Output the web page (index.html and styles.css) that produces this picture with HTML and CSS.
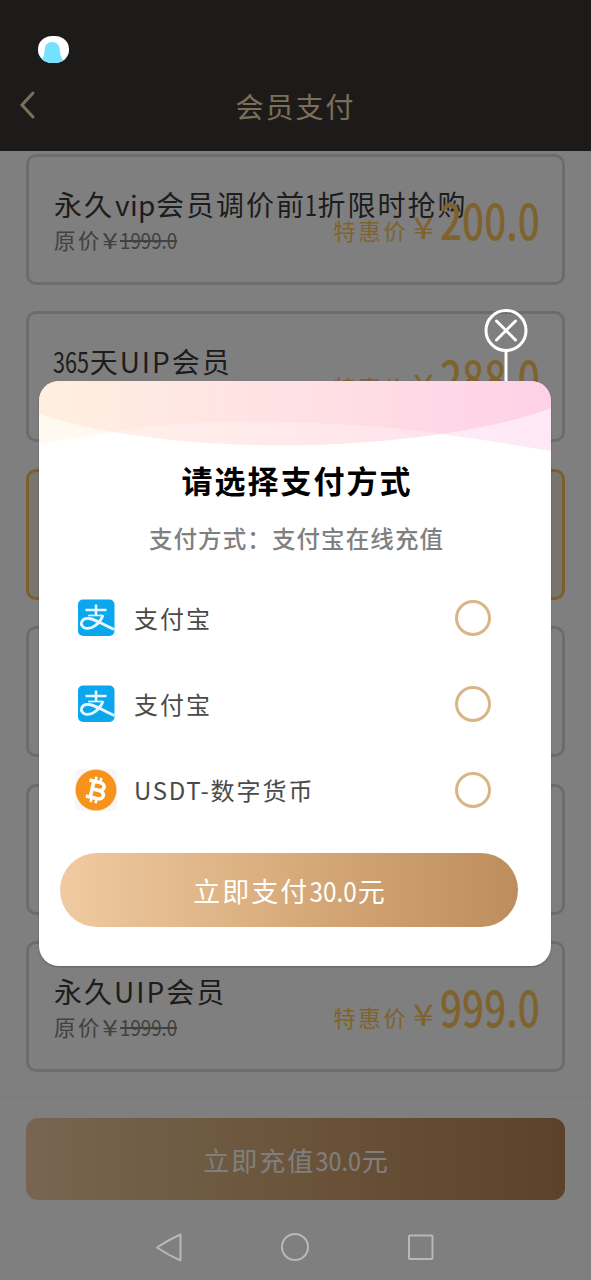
FILE: index.html
```html
<!DOCTYPE html>
<html lang="zh-CN">
<head>
<meta charset="utf-8">
<title>会员支付</title>
<link rel="stylesheet" href="styles.css">
</head>
<body>
<div class="screen">
  <header class="header">
    <svg class="back" viewBox="0 0 18 28"><path d="M14 2 3 14 14 26"/></svg>
    <h1 class="header-title">会员支付</h1>
  </header>
  <main class="plans">
    <section class="plan">
      <div class="info"><div class="name">永久<span class="vip">vip</span>会员调价前<span class="one">1</span>折限时抢购</div><div class="old">原价<span class="old-yen">¥</span><s>1999.0</s></div></div>
      <div class="deal">特惠价<span class="yen">¥</span><span class="amount">200.0</span></div>
    </section>
    <section class="plan">
      <div class="info"><div class="name"><span class="days">365</span>天<span class="upper">UIP</span>会员</div></div>
      <div class="deal">特惠价<span class="yen">¥</span><span class="amount">288.0</span></div>
    </section>
    <section class="plan selected"></section>
    <section class="plan"></section>
    <section class="plan"></section>
    <section class="plan">
      <div class="info"><div class="name">永久<span class="upper">UIP</span>会员</div><div class="old">原价<span class="old-yen">¥</span><s>1999.0</s></div></div>
      <div class="deal">特惠价<span class="yen">¥</span><span class="amount">999.0</span></div>
    </section>
  </main>
  <footer class="footer">
    <div class="recharge">立即充值<span class="sum">30.0</span>元</div>
  </footer>
</div>

<div class="scrim">
  <svg class="status-dot" viewBox="0 0 31 27"><defs><clipPath id="dot"><rect width="31" height="27" rx="14" ry="13"/></clipPath></defs><g clip-path="url(#dot)"><rect width="31" height="27" fill="#fff"/><path d="M4 23C7 20 6 16 7 12C8 4 20 4 21.500 12C22.500 18 22 20 25 24L22 27H7Z" fill="#74e2fc"/></g></svg>
  <div class="close">
    <svg viewBox="0 0 44 72"><circle cx="22" cy="21.500" r="20"/><path d="M12.500 12 31.500 31M31.500 12 12.500 31M22 42V72"/></svg>
  </div>
  <div class="dialog">
    <svg class="wave" viewBox="0 0 512 71">
      <defs>
        <linearGradient id="w1"><stop offset="0" stop-color="#ffe2cc"/><stop offset=".5" stop-color="#ffced4"/><stop offset="1" stop-color="#fdb4d4"/></linearGradient>
        <linearGradient id="w2"><stop offset="0" stop-color="#fff4dc"/><stop offset=".5" stop-color="#ffdce0"/><stop offset="1" stop-color="#fdc8ee"/></linearGradient>
      </defs>
      <path fill="url(#w2)" opacity=".42" d="M0 0H512V70Q460 61 402 53C310 39 150 36 74 51Q30 58 0 63Z"/>
      <path fill="url(#w1)" opacity=".45" d="M0 0H512V27Q470 43 402 53C290 69 180 68 74 51Q30 43 0 33Z"/>
    </svg>
    <h2 class="title">请选择支付方式</h2>
    <p class="subtitle">支付方式：支付宝在线充值</p>
    <ul class="methods">
      <li class="method"><svg class="icon" viewBox="0 0 42 42"><use href="#alipay"/></svg><span>支付宝</span><i class="radio"></i></li>
      <li class="method"><svg class="icon" viewBox="0 0 42 42"><use href="#alipay"/></svg><span>支付宝</span><i class="radio"></i></li>
      <li class="method"><svg class="icon" viewBox="0 0 42 42"><rect width="42" height="42" rx="5" fill="#f8f6f6"/><circle cx="21" cy="21" r="20.500" fill="#f7931a"/><g transform="rotate(13 21 21)" fill="none" stroke="#fff" stroke-width="3.600"><path d="M12.500 12.800H23C30 12.800 30 20.700 23 20.700H17M23 20.700C31.500 20.700 31.500 29.200 23.500 29.200H12.500M17 12.800V29.200"/><path d="M18.500 8V13M23.500 8V13M18.500 29V34M23.500 29V34" stroke-width="2.600"/></g></svg><span><span class="latin">USDT-</span>数字货币</span><i class="radio"></i></li>
    </ul>
    <div class="pay">立即支付<span class="sum">30.0</span>元</div>
  </div>
  <nav class="nav">
    <svg viewBox="0 0 32 32"><path d="M27.500 3.500V29.500Q15 24 4 16.500Q15 9 27.500 3.500Z"/></svg>
    <svg viewBox="0 0 32 32"><circle cx="16" cy="16" r="13"/></svg>
    <svg viewBox="0 0 32 32"><rect x="4" y="4.500" width="23.500" height="23.500" rx="1"/></svg>
  </nav>
</div>

<svg class="defs" width="0" height="0">
  <symbol id="alipay" viewBox="0 0 42 42"><rect x="3" y="2.500" width="36.500" height="36.500" rx="5" fill="#0ba7ee"/><g fill="none" stroke="#e9f8ff"><path d="M10.500 13H31.500M21 7.500V18" stroke-width="2.600"/><path d="M13 18.500H28" stroke-width="1.600"/><path d="M28 18C25 27 16 33 10 31C3 28 7 20.500 14 21.500C22 22.500 29 28.500 39.500 32.500" stroke-width="2.800"/></g></symbol>
</svg>
</body>
</html>
```
FILE: styles.css
```css
* { box-sizing: border-box; margin: 0; padding: 0; }
body { width: 591px; height: 1280px; overflow: hidden; position: relative; font-family: "Noto Sans CJK SC", "Noto Sans", sans-serif; font-weight: 400; }
.screen { height: 1280px; background: #fff; display: flex; flex-direction: column; }
.header { height: 151px; flex: none; background: #383733; display: flex; align-items: flex-start; padding: 91px 0 0 19px; color: #f6dfb4; }
.back { width: 18px; height: 28px; fill: none; stroke: currentColor; stroke-width: 3; stroke-linecap: round; }
.header-title { flex: 1; margin-right: 37px; text-align: center; font-size: 28px; font-weight: 400; line-height: 31px; letter-spacing: 2px; }
.plans { height: 948px; flex: none; padding: 2.500px 26px 0; display: flex; flex-direction: column; gap: 26.500px; overflow: hidden; }
.plan { height: 131px; flex: none; border: 3px solid #d8d8d8; border-radius: 10px; display: grid; grid-template-columns: 1fr; padding: 28px 24px 0 25px; color: #3a3a3a; }
.plan > * { grid-area: 1 / 1; }
.selected { border-color: #f6bf5a; background: #eeebdc; }
.name { font-size: 28px; line-height: 38px; letter-spacing: 2px; white-space: nowrap; }
.vip { letter-spacing: .4px; margin-left: 1px; }
.one { display: inline-block; transform: scaleX(.8); margin: 0 -3px; }
.days { display: inline-block; letter-spacing: 0; transform: scaleX(.77); transform-origin: left; margin: 0 -10px 0 -1px; }
.upper { letter-spacing: 2px; }
.old { font-size: 21.500px; line-height: 34px; letter-spacing: 2.500px; color: #828282; white-space: nowrap; }
.old-yen { display: inline-block; letter-spacing: 0; transform: scaleX(1.3); margin: 0 4px 0 2px; }
.old s { display: inline-block; letter-spacing: 0; transform: scaleX(.87); transform-origin: left; }
.deal { justify-self: end; display: flex; align-items: baseline; height: 68px; line-height: 68px; color: #ffc65c; font-size: 22.500px; letter-spacing: 2.500px; white-space: nowrap; }
.yen { font-size: 30px; letter-spacing: 0; margin: 0 8px 0 7px; transform: translateY(-1px) scaleX(1.25); }
.amount { width: 98px; font-size: 49px; font-weight: 500; letter-spacing: 0; transform: scaleX(.79); transform-origin: left; }
.footer { flex: 1; padding: 19px 26px 0; box-shadow: 0 -1px 4px rgba(0,0,0,.06); }
.recharge { height: 82px; border-radius: 12px; background: linear-gradient(90deg, #eecba2, #d8ad78 50%, #b98652); color: #fff; font-size: 26px; letter-spacing: 2px; text-align: center; line-height: 83px; padding-left: 2px; }
.recharge { background: linear-gradient(90deg, #f0cca4, #d5a874 50%, #b88450); }
.sum { display: inline-block; letter-spacing: 0; transform: scaleX(.9); margin: 0 -2px; }
.scrim { position: absolute; inset: 0; background: rgba(0,0,0,.5); }
.status-dot { position: absolute; left: 38px; top: 36px; width: 31px; height: 27px; }
.close { position: absolute; left: 483.500px; top: 309px; width: 44px; height: 72px; }
.close svg { display: block; width: 44px; height: 72px; fill: none; stroke: #fff; stroke-width: 3; stroke-linecap: round; }
.dialog { position: absolute; left: 39px; top: 381px; width: 512px; height: 585px; background: #fff; border-radius: 20px; overflow: hidden; display: flex; flex-direction: column; box-shadow: 0 1px 2px rgba(0,0,0,.25); }
.wave { display: block; width: 512px; height: 71px; flex: none; }
.title { margin-top: 4px; height: 48px; line-height: 48px; text-align: center; font-size: 31px; font-weight: 700; letter-spacing: 2px; color: #000; padding-left: 4px; }
.subtitle { margin-top: 16px; height: 36px; line-height: 36px; text-align: center; font-size: 23.500px; font-weight: 500; letter-spacing: 1.100px; color: #808080; white-space: nowrap; padding-left: 3px; }
.methods { list-style: none; margin-top: 19px; padding: 0 60px 0 36px; }
.method { height: 86px; display: flex; align-items: center; font-size: 24px; letter-spacing: 2px; color: #4a4a4a; }
.method > span { margin-top: -2px; }
.icon { width: 42px; height: 42px; margin-right: 17px; }
.latin { letter-spacing: 1.700px; }
.radio { margin-left: auto; width: 36px; height: 36px; border: 3px solid #dab586; border-radius: 50%; }
.pay { margin: 20px 33px 0 21px; height: 74px; border-radius: 37px; background: linear-gradient(90deg, #f0caa1, #d8ab7b 50%, #bd8d5d); color: #fff; text-align: center; font-size: 27px; line-height: 75px; letter-spacing: 2px; padding-left: 2px; }
.nav { position: absolute; left: 153px; top: 1230.500px; width: 284px; display: flex; justify-content: space-between; }
.nav svg { width: 32px; height: 32px; fill: none; stroke: #b8b8b8; stroke-width: 2; stroke-linejoin: round; }
.defs { position: absolute; }
```
